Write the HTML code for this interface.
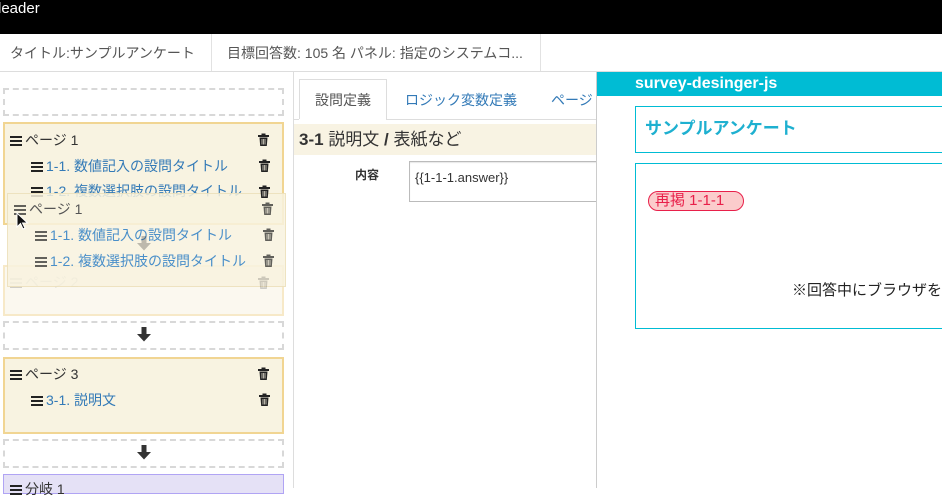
<!DOCTYPE html>
<html><head><meta charset="utf-8">
<style>
*{box-sizing:border-box;margin:0;padding:0}
body{width:942px;height:488px;overflow:hidden;background:#fff;font-family:"Liberation Sans","Noto Sans CJK JP",sans-serif;position:relative;color:#333}
.a{position:absolute}
.t{position:absolute;font-size:14px;white-space:nowrap;line-height:18px}
.blue{color:#337ab7}
.box{position:absolute;background:#f8f3e1;border:2px solid #f1d592}
.dash{position:absolute;border:2px dashed #d8d8d8;background:#fff}
.ham{display:inline-block;width:12px;height:10px;vertical-align:-1px;margin-right:3px;background:linear-gradient(#222 0 2px,transparent 2px 4px,#222 4px 6px,transparent 6px 8px,#222 8px 10px)}
</style></head><body>
<div class="a" style="left:0;top:0;width:942px;height:34px;background:#000"></div>
<div class="t" style="left:-2px;top:0px;color:#fff;font-size:15px;line-height:18px">leader</div>
<div class="a" style="left:0;top:34px;width:942px;height:38px;border-bottom:1px solid #ddd"></div>
<div class="a" style="left:211px;top:34px;width:1px;height:37px;background:#e2e2e2"></div>
<div class="a" style="left:540px;top:34px;width:1px;height:37px;background:#e2e2e2"></div>
<div class="t" style="left:10px;top:44px;color:#555">タイトル:サンプルアンケート</div>
<div class="t" style="left:227px;top:44px;color:#555">目標回答数: 105 名 パネル: 指定のシステムコ...</div>
<div class="a" style="left:293px;top:72px;width:1px;height:416px;background:#ddd"></div>

<div class="dash" style="left:3px;top:88px;width:281px;height:28px"></div>
<div class="box" style="left:3px;top:122px;width:281px;height:103px"></div>
<div class="t" style="left:10px;top:131px"><span class="ham"></span>ページ 1</div>
<div class="t blue" style="left:31px;top:157px"><span class="ham"></span>1-1. 数値記入の設問タイトル</div>
<div class="t blue" style="left:31px;top:182px"><span class="ham"></span>1-2. 複数選択肢の設問タイトル</div>
<div class="box" style="left:3px;top:265px;width:281px;height:51px;opacity:.5"></div>
<div class="t" style="left:10px;top:273px;color:#ccc"><span class="ham" style="opacity:.2"></span>ページ 2</div>
<div class="dash" style="left:3px;top:321px;width:281px;height:29px"></div>
<div class="box" style="left:3px;top:357px;width:281px;height:77px"></div>
<div class="t" style="left:10px;top:365px"><span class="ham"></span>ページ 3</div>
<div class="t blue" style="left:31px;top:391px"><span class="ham"></span>3-1. 説明文</div>
<div class="dash" style="left:3px;top:439px;width:281px;height:29px"></div>
<div class="a" style="left:3px;top:474px;width:281px;height:20px;background:#e5e1f6;border:1px solid #b0a4f4"></div>
<div class="t" style="left:10px;top:480px"><span class="ham"></span>分岐 1</div>

<!-- drag ghost -->
<div class="a" style="left:7px;top:193px;width:279px;height:94px;background:rgba(248,242,222,.85);border:1px solid rgba(230,215,170,.6)"></div>
<div class="t" style="left:14px;top:200px;color:#555"><span class="ham" style="opacity:.7"></span>ページ 1</div>
<div class="t" style="left:35px;top:226px;color:#4a8fc9"><span class="ham" style="opacity:.7"></span>1-1. 数値記入の設問タイトル</div>
<div class="t" style="left:35px;top:252px;color:#4a8fc9"><span class="ham" style="opacity:.7"></span>1-2. 複数選択肢の設問タイトル</div>

<svg class="a" style="left:0;top:0" width="300" height="488">
<defs><g id="tr"><rect x="0" y="1" width="11" height="2" fill="#222"/><rect x="3.5" y="-0.5" width="4" height="2" fill="#222"/><path d="M1.5 3.5h8l-.7 8.5h-6.6z" fill="#222"/><path d="M4 5v5.5M5.5 5v5.5M7 5v5.5" stroke="#f8f3e1" stroke-width=".7"/></g>
<path id="ar" d="M-2.5 0h5v7h4.5l-7 7.5l-7-7.5h4.5z" fill="#333"/></defs>
<use href="#tr" x="258" y="134"/><use href="#tr" x="259" y="160"/><use href="#tr" x="259" y="186"/>
<use href="#tr" x="258" y="368"/><use href="#tr" x="259" y="394"/>
<use href="#tr" x="262" y="203" opacity=".7"/><use href="#tr" x="263" y="229" opacity=".7"/><use href="#tr" x="263" y="255" opacity=".7"/>
<use href="#tr" x="258" y="277" opacity=".2"/>
<use href="#ar" x="144" y="327"/><use href="#ar" x="144" y="445"/>
<use href="#ar" x="144" y="236" opacity=".3"/>
<path d="M17 213v14l3.5-3.5l2.5 5.5l2-1l-2.5-5h5z" fill="#111" stroke="#fff" stroke-width="1"/>
</svg>

<!-- middle -->
<div class="a" style="left:299px;top:79px;width:88px;height:41px;border:1px solid #ddd;border-bottom:none;background:#fff"></div>
<div class="a" style="left:294px;top:119px;width:302px;height:1px;background:#ddd"></div>
<div class="a" style="left:299px;top:119px;width:87px;height:1px;background:#fff"></div>
<div class="t" style="left:315px;top:91px;color:#555">設問定義</div>
<div class="t blue" style="left:405px;top:91px">ロジック変数定義</div>
<div class="t blue" style="left:551px;top:91px">ページ</div>
<div class="a" style="left:294px;top:124px;width:302px;height:31px;background:#f8f3e3"></div>
<div class="t" style="left:299px;top:130px;font-size:17px;line-height:20px"><b>3-1</b> 説明文 <b>/</b> 表紙など</div>
<div class="t" style="left:355px;top:166px;font-size:12px;font-weight:bold">内容</div>
<div class="a" style="left:409px;top:161px;width:190px;height:41px;border:1px solid #bbb;box-shadow:inset 0 1px 1px rgba(0,0,0,.1)"></div>
<div class="t" style="left:415px;top:169px;font-size:13px">{{1-1-1.answer}}</div>

<!-- right -->
<div class="a" style="left:596px;top:72px;width:346px;height:416px;background:#fff;border-left:1px solid #ccc"></div>
<div class="a" style="left:597px;top:72px;width:345px;height:24px;background:#00bcd4"></div>
<div class="t" style="left:635px;top:74px;color:#fff;font-weight:bold;font-size:16px;line-height:20px">survey-desinger-js</div>
<div class="a" style="left:635px;top:106px;width:320px;height:47px;border:1px solid #00bcd4"></div>
<div class="t" style="left:645px;top:119px;color:#1eb0d0;font-weight:bold;font-size:17px;line-height:20px">サンプルアンケート</div>
<div class="a" style="left:635px;top:163px;width:320px;height:166px;border:1px solid #00bcd4"></div>
<div class="a" style="left:648px;top:191px;width:96px;height:20px;background:#fbcccc;border:1px solid #e8204a;border-radius:10px"></div>
<div class="t" style="left:655px;top:192px;color:#e8204a;font-size:15px">再掲 1-1-1</div>
<div class="t" style="left:792px;top:282px;font-size:15px;color:#222">※回答中にブラウザを</div>
</body></html>
